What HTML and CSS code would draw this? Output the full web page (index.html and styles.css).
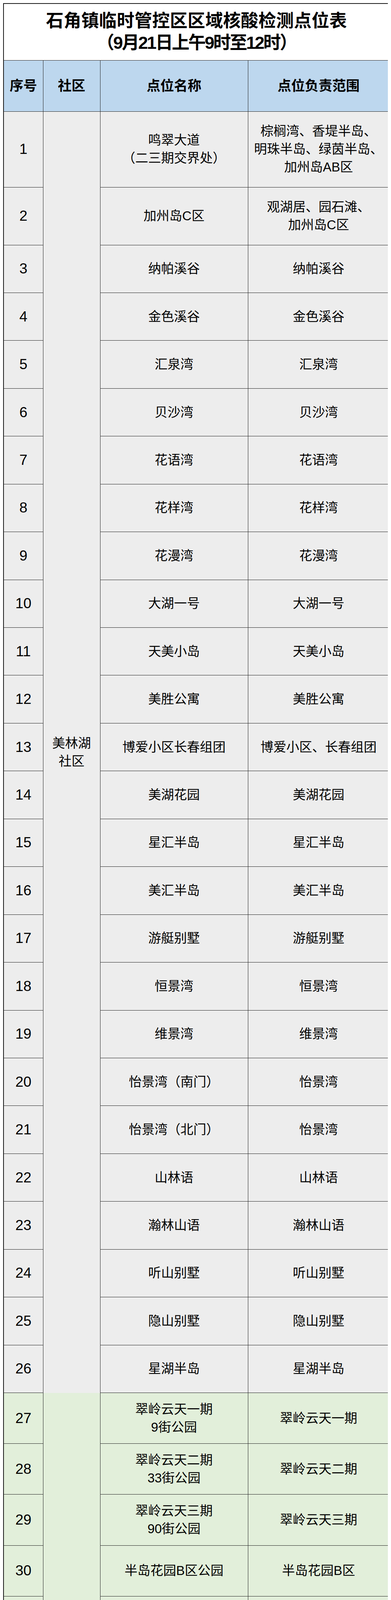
FILE: index.html
```html
<!DOCTYPE html>
<html lang="zh-CN">
<head>
<meta charset="utf-8">
<title>石角镇临时管控区区域核酸检测点位表</title>
<link rel="stylesheet" href="styles.css">
</head>
<body>
<table class="sheet">
  <colgroup>
    <col class="c-no">
    <col class="c-comm">
    <col class="c-name">
    <col class="c-range">
  </colgroup>
  <tbody>
    <tr class="row-title">
      <td class="title" colspan="4"><div class="title-main">石角镇临时管控区区域核酸检测点位表</div><div class="title-sub">（9月21日上午9时至12时）</div></td>
    </tr>
    <tr class="row-head">
      <th>序号</th><th>社区</th><th>点位名称</th><th>点位负责范围</th>
    </tr>
    <tr class="grey r-first"><td class="no">1</td><td class="comm comm-mei" rowspan="26">美林湖<br>社区</td><td>鸣翠大道<br>（二三期交界处）</td><td>棕榈湾、香堤半岛、<br>明珠半岛、绿茵半岛、<br>加州岛AB区</td></tr>
    <tr class="grey r-second"><td class="no">2</td><td>加州岛C区</td><td>观湖居、园石滩、<br>加州岛C区</td></tr>
    <tr class="grey"><td class="no">3</td><td>纳帕溪谷</td><td>纳帕溪谷</td></tr>
    <tr class="grey"><td class="no">4</td><td>金色溪谷</td><td>金色溪谷</td></tr>
    <tr class="grey"><td class="no">5</td><td>汇泉湾</td><td>汇泉湾</td></tr>
    <tr class="grey"><td class="no">6</td><td>贝沙湾</td><td>贝沙湾</td></tr>
    <tr class="grey"><td class="no">7</td><td>花语湾</td><td>花语湾</td></tr>
    <tr class="grey"><td class="no">8</td><td>花样湾</td><td>花样湾</td></tr>
    <tr class="grey"><td class="no">9</td><td>花漫湾</td><td>花漫湾</td></tr>
    <tr class="grey"><td class="no">10</td><td>大湖一号</td><td>大湖一号</td></tr>
    <tr class="grey"><td class="no">11</td><td>天美小岛</td><td>天美小岛</td></tr>
    <tr class="grey"><td class="no">12</td><td>美胜公寓</td><td>美胜公寓</td></tr>
    <tr class="grey"><td class="no">13</td><td>博爱小区长春组团</td><td>博爱小区、长春组团</td></tr>
    <tr class="grey"><td class="no">14</td><td>美湖花园</td><td>美湖花园</td></tr>
    <tr class="grey"><td class="no">15</td><td>星汇半岛</td><td>星汇半岛</td></tr>
    <tr class="grey"><td class="no">16</td><td>美汇半岛</td><td>美汇半岛</td></tr>
    <tr class="grey"><td class="no">17</td><td>游艇别墅</td><td>游艇别墅</td></tr>
    <tr class="grey"><td class="no">18</td><td>恒景湾</td><td>恒景湾</td></tr>
    <tr class="grey"><td class="no">19</td><td>维景湾</td><td>维景湾</td></tr>
    <tr class="grey"><td class="no">20</td><td>怡景湾（南门）</td><td>怡景湾</td></tr>
    <tr class="grey"><td class="no">21</td><td>怡景湾（北门）</td><td>怡景湾</td></tr>
    <tr class="grey"><td class="no">22</td><td>山林语</td><td>山林语</td></tr>
    <tr class="grey"><td class="no">23</td><td>瀚林山语</td><td>瀚林山语</td></tr>
    <tr class="grey"><td class="no">24</td><td>听山别墅</td><td>听山别墅</td></tr>
    <tr class="grey"><td class="no">25</td><td>隐山别墅</td><td>隐山别墅</td></tr>
    <tr class="grey"><td class="no">26</td><td>星湖半岛</td><td>星湖半岛</td></tr>
    <tr class="green"><td class="no">27</td><td class="comm comm-bi" rowspan="20">碧湖<br>社区</td><td>翠岭云天一期<br>9街公园</td><td>翠岭云天一期</td></tr>
    <tr class="green"><td class="no">28</td><td>翠岭云天二期<br>33街公园</td><td>翠岭云天二期</td></tr>
    <tr class="green"><td class="no">29</td><td>翠岭云天三期<br>90街公园</td><td>翠岭云天三期</td></tr>
    <tr class="green"><td class="no">30</td><td>半岛花园B区公园</td><td>半岛花园B区</td></tr>
    <tr class="green"><td class="no">31</td><td>湖光翠色卡口</td><td>半岛花园A区、<br>湖光翠色、水蓝湾</td></tr>
    <tr class="green"><td class="no">32</td><td>水云天中心公园</td><td>翠林水岸、水云天、<br>鸟语花香</td></tr>
    <tr class="green"><td class="no">33</td><td>翠林水岸3街公园</td><td>翠林水岸、水云天、<br>鸟语花香</td></tr>
    <tr class="green"><td class="no">34</td><td>映月湾27街公园</td><td>映月湾、星月湾</td></tr>
    <tr class="green"><td class="no">35</td><td>星月湾篮球场</td><td>映月湾、星月湾</td></tr>
    <tr class="green"><td class="no">36</td><td>澜花语岸<br>2街停车场</td><td>澜花语岸</td></tr>
    <tr class="green"><td class="no">37</td><td>翠山湖畔四片<br>1街卡口</td><td>翠山湖畔四片1街</td></tr>
    <tr class="green"><td class="no">38</td><td>翠山湖畔四片<br>2街公园</td><td>翠山湖畔四片2街-6街</td></tr>
    <tr class="green"><td class="no">39</td><td>翠山湖畔三片<br>中心公园（靠近会所）</td><td>翠山湖畔三片</td></tr>
    <tr class="green"><td class="no">40</td><td>翠山湖畔会所<br>（3环岛）</td><td>翠山湖畔、翠山湖畔一<br>片、二片</td></tr>
    <tr class="green"><td class="no">41</td><td>绿茵翠岭1环岛</td><td>绿茵翠岭、翠山湖畔</td></tr>
    <tr class="green"><td class="no">42</td><td>碧桂园半岛壹号一期<br>4栋大堂外前坪</td><td>碧桂园半岛壹号</td></tr>
    <tr class="green"><td class="no">43</td><td>碧桂园半岛壹号<br>二期公园</td><td>碧桂园半岛壹号</td></tr>
    <tr class="green"><td class="no">44</td><td>碧桂园半岛壹号<br>三期33栋大堂外通道</td><td>碧桂园半岛壹号</td></tr>
    <tr class="green"><td class="no">45</td><td>11栋大堂外前坪</td><td>保利麓湖</td></tr>
    <tr class="green"><td class="no">46</td><td>11栋大堂外前道</td><td>融创湖滨首府</td></tr>
  </tbody>
</table>
</body>
</html>
```

FILE: styles.css
```css
html, body {
  background: #ffffff;
}

body {
  margin: 8px;
  font-family: "Liberation Sans", "Noto Sans CJK SC", sans-serif;
  color: #000000;
}

.sheet {
  border-collapse: collapse;
  table-layout: fixed;
  width: 987px;
  border: 2px solid #1a1a1a;
}

.c-no { width: 101px; }
.c-comm { width: 146px; }
.c-name { width: 378px; }
.c-range { width: 362px; }

.sheet td,
.sheet th {
  border: 1px solid #262626;
  padding: 0;
  text-align: center;
  vertical-align: middle;
  font-size: 33px;
  line-height: 46px;
  font-weight: 400;
  white-space: nowrap;
}

/* row heights */
.sheet tr.row-title { height: 145.5px; }
.sheet tr.row-head { height: 130.5px; }
.sheet tr.grey { height: 122.45px; }
.sheet tr.green { height: 130.2px; }
.sheet tr.r-first { height: 194.5px; }
.sheet tr.r-second { height: 147.5px; }

/* title */
.sheet td.title {
  background: #ffffff;
  font-size: 45px;
  line-height: 56px;
  font-weight: 700;
}

.title-main {
  letter-spacing: 0.3px;
}

.title-sub {
  letter-spacing: -3px;
}

/* header */
.sheet th {
  background: #bdd7ee;
  font-size: 35px;
  font-weight: 700;
}

/* body backgrounds */
.grey td { background: #ededed; }
.green td { background: #e2efda; }

.sheet td.no {
  font-size: 37px;
}

.sheet td.comm-mei {
  background: #ededed;
  border-bottom-style: hidden;
}

.sheet td.comm-bi {
  background: #e2efda;
}
```
